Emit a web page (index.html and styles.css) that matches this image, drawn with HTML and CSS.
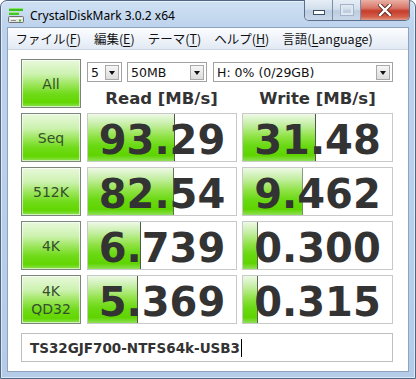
FILE: index.html
```html
<!DOCTYPE html>
<html lang="ja">
<head>
<meta charset="utf-8">
<title>CrystalDiskMark 3.0.2 x64</title>
<link rel="stylesheet" href="styles.css">
</head>
<body>
<div class="window">
  <div class="titlebar">
    <svg class="appicon" width="16" height="16" viewBox="0 0 16 16">
      <rect x="1" y="1" width="14" height="3" fill="#3cc21a"/>
      <rect x="1" y="1" width="14" height="1" fill="#8be66a"/>
      <rect x="1" y="5" width="10" height="3" fill="#46c822"/>
      <rect x="1" y="5" width="10" height="1" fill="#96ea78"/>
      <rect x="0.5" y="9.5" width="15" height="6" rx="1" fill="#e4e4e4" stroke="#6f6f6f"/>
      <rect x="2" y="11" width="12" height="1" fill="#ffffff"/>
      <rect x="3" y="13" width="5" height="1" fill="#8a8a8a"/>
      <rect x="11" y="12.5" width="2" height="2" fill="#48c020"/>
    </svg>
    <span class="title">CrystalDiskMark 3.0.2 x64</span>
    <div class="caption">
      <div class="cbtn min"><span class="glyph-min"></span></div>
      <div class="cbtn max"><span class="glyph-max"></span></div>
      <div class="cbtn close">
        <svg width="14" height="12" viewBox="0 0 14 12">
          <path d="M2 1 L12 11 M12 1 L2 11" stroke="#5b2a24" stroke-width="4.2" stroke-linecap="square"/>
          <path d="M2 1 L12 11 M12 1 L2 11" stroke="#ffffff" stroke-width="2.4" stroke-linecap="square"/>
        </svg>
      </div>
    </div>
  </div>
  <div class="inner">
    <div class="menubar">
      <span class="mi">ファイル(<u>F</u>)</span>
      <span class="mi">編集(<u>E</u>)</span>
      <span class="mi">テーマ(<u>T</u>)</span>
      <span class="mi">ヘルプ(<u>H</u>)</span>
      <span class="mi">言語(<u>L</u>anguage)</span>
    </div>
    <div class="client">
      <div class="grid">
        <div class="btn">All</div>
        <div class="controls">
          <div class="combos">
            <div class="combo c1"><span class="ctext">5</span><span class="arrow"></span></div>
            <div class="combo c2"><span class="ctext">50MB</span><span class="arrow"></span></div>
            <div class="combo c3"><span class="ctext">H: 0% (0/29GB)</span><span class="arrow"></span></div>
          </div>
          <div class="heads">
            <div class="head">Read [MB/s]</div>
            <div class="head">Write [MB/s]</div>
          </div>
        </div>

        <div class="btn">Seq</div>
        <div class="val read" style="--w:59%">93.29</div>
        <div class="val" style="--w:49%">31.48</div>

        <div class="btn">512K</div>
        <div class="val read" style="--w:58%">82.54</div>
        <div class="val" style="--w:40%">9.462</div>

        <div class="btn">4K</div>
        <div class="val read" style="--w:36%">6.739</div>
        <div class="val" style="--w:10%">0.300</div>

        <div class="btn two">4K<br>QD32</div>
        <div class="val read" style="--w:34%">5.369</div>
        <div class="val" style="--w:10%">0.315</div>
      </div>
      <div class="comment">TS32GJF700-NTFS64k-USB3<span class="caret"></span></div>
    </div>
  </div>
</div>
</body>
</html>
```

FILE: styles.css
```css
html, body {
  margin: 0;
  padding: 0;
}
body {
  width: 416px;
  height: 379px;
  overflow: hidden;
  background: #ffffff;
}
.window {
  box-sizing: border-box;
  width: 416px;
  height: 379px;
  border: 1px solid #4f6685;
  border-radius: 7px 7px 0 0;
  background: linear-gradient(#cfe0f3 0px, #bdd3ec 26px, #b4cce8 100%);
  padding: 0 6px 6px;
  display: flex;
  flex-direction: column;
  box-shadow: inset 0 0 0 1px rgba(255, 255, 255, 0.55);
}
.titlebar {
  height: 26px;
  display: flex;
  align-items: center;
  padding-left: 1px;
}
.appicon {
  display: block;
  margin-top: 2px;
}
.title {
  margin-left: 6px;
  margin-top: 2px;
  font: 12px "Noto Sans", "DejaVu Sans", sans-serif;
  color: #000000;
}
.caption {
  align-self: flex-start;
  margin-left: auto;
  margin-right: -1px;
  margin-top: -1px;
  display: flex;
  height: 20px;
  border: 1px solid #5a6f8e;
  border-top: none;
  border-radius: 0 0 5px 5px;
  overflow: hidden;
}
.cbtn {
  height: 20px;
  display: flex;
  align-items: center;
  justify-content: center;
}
.min, .max {
  width: 27px;
  background: linear-gradient(#e6eef7 0%, #d3dfec 45%, #bccde0 55%, #c9d8e9 100%);
  border-right: 1px solid #7a8ca6;
}
.glyph-min {
  display: block;
  width: 10px;
  height: 3px;
  background: #ffffff;
  border: 1px solid #3b4e6a;
  margin-top: 5px;
}
.glyph-max {
  display: block;
  width: 8px;
  height: 6px;
  border: 2px solid #dfe7f1;
  outline: 1px solid #a4b3c7;
}
.close {
  width: 48px;
  background: linear-gradient(#eab0a4 0%, #d9776a 40%, #c63c2a 55%, #d3614c 85%, #e19a86 100%);
}
.inner {
  flex: 1;
  display: flex;
  flex-direction: column;
  border: 1px solid #8ea3c0;
}
.menubar {
  box-sizing: border-box;
  height: 22px;
  display: flex;
  align-items: center;
  background: linear-gradient(#fbfcfe, #edf2f9 60%, #e2e9f3);
  border-bottom: 1px solid #cdd6e2;
  font: 12.5px "Noto Sans CJK JP", sans-serif;
  color: #111111;
  padding-left: 1px;
}
.mi {
  padding: 0 6.5px;
  line-height: 20px;
}
.mi u {
  text-decoration-thickness: 1px;
  text-underline-offset: 2px;
}
.client {
  flex: 1;
  background: #ffffff;
  padding: 9px 0 9px 13px;
  display: flex;
  flex-direction: column;
}
.grid {
  display: grid;
  grid-template-columns: 60px 151px 151px;
  grid-auto-rows: 49px;
  column-gap: 5px;
  row-gap: 5px;
}
.btn {
  box-sizing: border-box;
  border: 1px solid #7c857a;
  background: linear-gradient(#e8f8dc 0%, #cdf2b0 30%, #9ce65c 52%, #70db1a 72%, #62d600 90%, #8fe255 100%);
  box-shadow: inset 0 0 0 1px rgba(255, 255, 255, 0.6);
  display: flex;
  align-items: center;
  justify-content: center;
  text-align: center;
  font: 14px/18px "DejaVu Sans", sans-serif;
  color: #34502a;
}
.controls {
  grid-column: 2 / 4;
  display: flex;
  flex-direction: column;
}
.combos {
  display: flex;
  margin-top: 3px;
  margin-left: 1px;
  height: 20px;
}
.combo {
  box-sizing: border-box;
  height: 20px;
  border: 1px solid #a2a2a2;
  background: #ffffff;
  display: flex;
  align-items: center;
  padding: 0 2px 0 3px;
  font: 12.5px "DejaVu Sans", sans-serif;
  color: #111111;
}
.c1 { width: 35px; }
.c2 { width: 80px; margin-left: 5px; }
.c3 { width: 180px; margin-left: 6px; }
.ctext {
  flex: 1;
  white-space: nowrap;
}
.arrow {
  box-sizing: border-box;
  width: 14px;
  height: 15px;
  border: 1px solid #a9a9a9;
  background: linear-gradient(#f6f6f6, #dcdcdc);
  position: relative;
}
.arrow::after {
  content: "";
  position: absolute;
  left: 3px;
  top: 5px;
  border-left: 3.5px solid transparent;
  border-right: 3.5px solid transparent;
  border-top: 4px solid #111111;
}
.heads {
  display: grid;
  grid-template-columns: 151px 151px;
  column-gap: 5px;
  margin-top: 7px;
}
.head {
  text-align: center;
  font: bold 16.5px/20px "DejaVu Sans", sans-serif;
  color: #333333;
}
.val {
  box-sizing: border-box;
  border: 1px solid #c9c9c9;
  background-color: #ffffff;
  background-image:
    linear-gradient(to left, #4d5a44 1px, transparent 1px),
    linear-gradient(#eef9e6 0%, #c6efa6 22%, #8fe244 48%, #69d912 68%, #5fd400 88%, #8ee157 100%);
  background-repeat: no-repeat;
  background-size: var(--w) 100%, var(--w) 100%;
  text-align: center;
  font: bold 40px/53px "DejaVu Sans", sans-serif;
  color: #333333;
  overflow: hidden;
  white-space: nowrap;
}
.read {
  margin-left: 1px;
}
.comment {
  box-sizing: border-box;
  margin-top: 9px;
  width: 372px;
  height: 29px;
  border: 1px solid #bfbfbf;
  background: #ffffff;
  display: flex;
  align-items: center;
  padding-left: 8px;
  font: bold 13.5px "DejaVu Sans", sans-serif;
  color: #333333;
}
.caret {
  display: block;
  width: 1px;
  height: 18px;
  margin-left: 1px;
  background: #000000;
}
```
